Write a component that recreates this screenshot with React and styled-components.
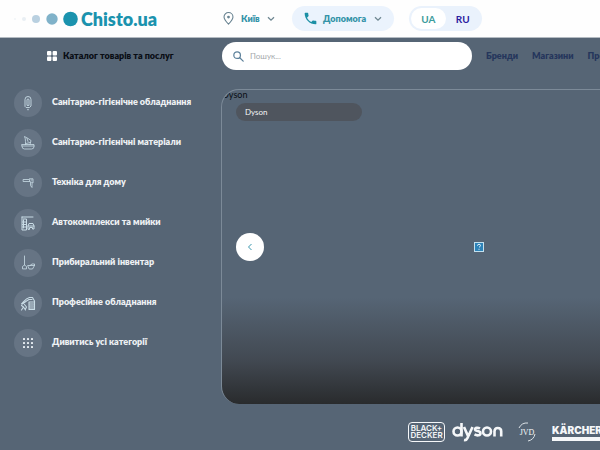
import styled, { createGlobalStyle } from "styled-components";

const GlobalStyle = createGlobalStyle`
  * {
    box-sizing: border-box;
  }

  body {
    margin: 0;
    background: #566575;
    font-family: "Lato", "Open Sans", sans-serif;
    font-size: 9px;
    line-height: 12px;
    overflow: hidden;
  }

  button, input {
    font: inherit;
    border: 0;
    padding: 0;
    background: transparent;
  }

  a {
    color: inherit;
    text-decoration: none;
  }

  svg {
    display: block;
    flex-shrink: 0;
  }
`;

const TopBar = styled.header`
  display: grid;
  grid-template-columns: 222px 1fr;
  align-items: center;
  height: 38px;
  background: #fefefe;
  border-bottom: 1px solid #b4bbc2;
`;

const Logo = styled.a`
  display: flex;
  align-items: center;
  padding-left: 14px;
`;

const LogoText = styled.span`
  margin-left: 3px;
  color: #1b93ae;
  font-size: 18px;
  line-height: 24px;
  font-weight: 800;
`;

const TopActions = styled.div`
  display: flex;
  align-items: center;
  gap: 10px;
`;

const CityButton = styled.button`
  display: flex;
  align-items: center;
  gap: 6px;
  min-width: 60px;
  padding-right: 7px;
  height: 25px;
  color: #3493a8;
  font-weight: 800;
`;

const HelpButton = styled(CityButton)`
  width: 102px;
  padding: 0 12px;
  border-radius: 13px;
  background: #ebf3fd;
`;

const ButtonLabel = styled.span`
  flex: 1;
  text-align: left;
`;

const LangSwitch = styled.div`
  display: flex;
  width: 73px;
  height: 25px;
  margin-left: 5px;
  padding: 2px;
  border-radius: 13px;
  background: #eaf2fc;
`;

const LangButton = styled.button`
  flex: 1;
  border-radius: 11px;
  font-size: 10px;
  font-weight: 700;
  color: ${props => (props.$active ? "#3c9c9c" : "#2a20a0")};
  background: ${props => (props.$active ? "#ffffff" : "transparent")};
`;

const SearchRow = styled.div`
  display: grid;
  grid-template-columns: 222px 250px 1fr;
  align-items: center;
  height: 36px;
`;

const CatalogButton = styled.button`
  display: flex;
  align-items: center;
  gap: 6px;
  padding-left: 47px;
  color: #090d14;
  font-weight: 800;
`;

const SearchBox = styled.label`
  display: flex;
  align-items: center;
  gap: 6px;
  height: 28px;
  padding: 0 11px;
  border-radius: 14px;
  background: #ffffff;
`;

const SearchInput = styled.input`
  flex: 1;
  min-width: 0;
  font-size: 8px;
  outline: 0;

  &::placeholder {
    color: #a5a9ad;
    opacity: 1;
  }
`;

const Nav = styled.nav`
  display: flex;
  gap: 14px;
  padding-left: 14px;
  overflow: hidden;
  white-space: nowrap;
  color: #25365c;
  font-weight: 800;
`;

const Main = styled.main`
  display: grid;
  grid-template-columns: 221px 1fr;
  padding-top: 15px;
`;

const Categories = styled.ul`
  display: flex;
  flex-direction: column;
  gap: 12px;
  margin: 0;
  padding: 0 0 0 14px;
  list-style: none;
`;

const Category = styled.a`
  display: flex;
  align-items: center;
  gap: 10px;
  height: 28px;
  color: #eef1f4;
  font-weight: 800;
  white-space: nowrap;
`;

const CategoryLabel = styled.span`
  padding-bottom: 2px;
`;

const IconCircle = styled.span`
  display: flex;
  align-items: center;
  justify-content: center;
  width: 28px;
  height: 28px;
  border-radius: 50%;
  background: #667484;
`;

const Content = styled.div`
  min-width: 0;
`;

const Banner = styled.section`
  position: relative;
  display: flex;
  align-items: center;
  height: 315px;
  padding-left: 14px;
  border: 1px solid #7c8a98;
  border-right: 0;
  border-bottom: 0;
  border-radius: 18px 0 0 18px;
  overflow: hidden;
  background: linear-gradient(transparent 66%, #424952 86%, #292b2d 100%);
`;

const BannerAlt = styled.span`
  position: absolute;
  top: 0;
  left: 0;
  line-height: 10px;
  color: #090d14;
`;

const BannerTag = styled.span`
  position: absolute;
  top: 13px;
  left: 14px;
  width: 126px;
  padding: 3px 9px;
  border-radius: 9px;
  background: #4f555e;
  color: #f3f4f5;
  font-size: 8px;
`;

const PrevButton = styled.button`
  display: flex;
  align-items: center;
  justify-content: center;
  width: 28px;
  height: 28px;
  border-radius: 50%;
  background: #ffffff;
`;

const Placeholder = styled.div`
  flex: 1;
  padding-left: 210px;
`;

const Brands = styled.div`
  display: flex;
  align-items: center;
  height: 56px;
  padding-left: 187px;
  overflow: hidden;
  color: #f5f7f9;
`;

const BlackDecker = styled.a`
  flex-shrink: 0;
  width: 37px;
  padding: 2px 0;
  border: 1px solid #f5f7f9;
  border-radius: 4px;
  font: 600 8px/7px "Inter", sans-serif;
  text-align: center;
`;

const BrandLink = styled.a`
  flex-shrink: 0;
  margin-left: 7px;
`;

const JvdLink = styled.a`
  flex-shrink: 0;
  margin-left: 14px;
`;

const Karcher = styled.a`
  flex-shrink: 0;
  margin-left: 15px;
  border-bottom: 4px solid #f5f7f9;
  font: 900 10px/13px "Inter", sans-serif;
`;

const LineIcon = ({ children, size = 16, color = "#c9dce6", width = 1 }) => (
  <svg
    width={size}
    height={size}
    viewBox="0 0 16 16"
    fill="none"
    stroke={color}
    strokeWidth={width}
    strokeLinecap="round"
    strokeLinejoin="round"
    aria-hidden="true"
  >
    {children}
  </svg>
);

const Chevron = () => (
  <svg width="8" height="6" viewBox="0 0 8 6" fill="none" stroke="#6f8792" strokeWidth="1.3" aria-hidden="true">
    <path d="M1 1.2 4 4.2 7 1.2" />
  </svg>
);

const categories = [
  {
    name: "Санітарно-гігієнічне обладнання",
    icon: (
      <>
        <path d="M5 11V4.500a3 3 0 0 1 6 0V11L9.500 12.500h-3ZM7 10V5a1 1 0 0 1 2 0v5Z" strokeWidth="0.9" />
        <path d="M8 14.500v.2" strokeWidth="1.3" />
      </>
    ),
  },
  {
    name: "Санітарно-гігієнічні матеріали",
    icon: (
      <path d="M2 9.500h12v2q0 2.500-2.500 2.500h-7Q2 14 2 11.500ZM2 11h12M5.500 9.500V6.500q0-3-1-5 4 2 6.500 4l-1 4M6 8.500l4-1M7 3.500l1 3" strokeWidth="0.8" />
    ),
  },
  {
    name: "Техніка для дому",
    icon: (
      <path d="M3.500 4.500h6v2h-6ZM9.500 3.800h3.500V8L11 7 9.500 6.500M10.500 7.500v3l1.500 2v-4M11 5h1" strokeWidth="0.8" />
    ),
  },
  {
    name: "Автокомплекси та мийки",
    icon: (
      <path d="M2 2h11M2 2v13h4.500V4H3.500M3.500 5v8M2.500 7h4M2.500 9.500h4M2.500 12h4M8 14v-3l1-2.500h4l1 2.500v3h-1.500v-1.500h-3V14ZM8 11h6" strokeWidth="1" />
    ),
  },
  {
    name: "Прибиральний інвентар",
    icon: (
      <path d="M4.500 1v9M2.500 13.500v-2l2-1.500 2 1.500v2ZM8 10.500h6.500L12.500 14H9.500ZM10 10.500 12 9h2.500v1.500" strokeWidth="0.8" />
    ),
  },
  {
    name: "Професійне обладнання",
    icon: (
      <path d="M1.500 9C4 7 5 3.500 9.500 2.500h3L14.500 6v8.500H9V7h5M2.500 9l4-3L9 4.500h3M10 9h3.500M10 11h3.500M10 13h3.500M1.500 10.500l2 1.500-2 3M3.500 12l2 3M4.500 9.500l2 2.500-1 2" strokeWidth="1.1" />
    ),
  },
  {
    name: "Дивитись усі категорії",
    icon: [4, 8, 12].map(y =>
      [4, 8, 12].map(x => (
        <rect key={`${x}-${y}`} x={x - 1} y={y - 1} width="2" height="2" rx=".5" fill="#e5ecf1" stroke="none" />
      ))
    ),
  },
];

const Header = () => (
  <TopBar>
    <Logo href="#">
      <svg width="64" height="16" viewBox="0 0 64 16" aria-hidden="true">
        <circle cx="1" cy="8" r="1" fill="#f0f4f7" />
        <circle cx="10" cy="8" r="2" fill="#e9eff4" />
        <circle cx="22" cy="8" r="4" fill="#b9d0e0" />
        <circle cx="38" cy="8" r="5.700" fill="#80b2c9" />
        <circle cx="56.500" cy="8" r="7.300" fill="#1b93ae" />
      </svg>
      <LogoText>Chisto.ua</LogoText>
    </Logo>
    <TopActions>
      <CityButton type="button">
        <LineIcon size={13} color="#65808f" width={1.3}>
          <path d="M8 15C5 11.800 2.500 9 2.500 6.200a5.500 5.500 0 0 1 11 0C13.500 9 11 11.800 8 15Z" />
          <circle cx="8" cy="6.200" r="1" fill="#65808f" />
        </LineIcon>
        <ButtonLabel>Київ</ButtonLabel>
        <Chevron />
      </CityButton>
      <HelpButton type="button">
        <svg width="13" height="13" viewBox="2 2 20 20" fill="#1b8fa5" aria-hidden="true">
          <path d="M6.620 10.790c1.440 2.830 3.760 5.140 6.590 6.590l2.200-2.200c.27-.27.67-.36 1.020-.24 1.120.37 2.330.57 3.570.57.55 0 1 .45 1 1V20c0 .55-.45 1-1 1C10.610 21 3 13.390 3 4c0-.55.45-1 1-1h3.500c.55 0 1 .45 1 1 0 1.250.2 2.450.57 3.570.11.35.03.74-.25 1.020Z" />
        </svg>
        <ButtonLabel>Допомога</ButtonLabel>
        <Chevron />
      </HelpButton>
      <LangSwitch>
        <LangButton type="button" $active>UA</LangButton>
        <LangButton type="button">RU</LangButton>
      </LangSwitch>
    </TopActions>
  </TopBar>
);

const Search = () => (
  <SearchRow>
    <CatalogButton type="button">
      <svg width="10" height="10" viewBox="0 0 10 10" fill="#ffffff" aria-hidden="true">
        <rect width="4.400" height="4.400" rx="1" />
        <rect x="5.600" width="4.400" height="4.400" rx="1" />
        <rect y="5.600" width="4.400" height="4.400" rx="1" />
        <rect x="5.600" y="5.600" width="4.400" height="4.400" rx="1" />
      </svg>
      Каталог товарів та послуг
    </CatalogButton>
    <SearchBox>
      <LineIcon size={11} color="#5d819b" width={1.8}>
        <circle cx="6" cy="6" r="4.800" />
        <path d="m9.800 9.800 5 5" />
      </LineIcon>
      <SearchInput type="search" placeholder="Пошук..." aria-label="Пошук" />
    </SearchBox>
    <Nav>
      <a href="#">Бренди</a>
      <a href="#">Магазини</a>
      <a href="#">Про нас</a>
    </Nav>
  </SearchRow>
);

const BrandStrip = () => (
  <Brands>
    <BlackDecker href="#">BLACK+ DECKER</BlackDecker>
    <BrandLink href="#" aria-label="dyson">
      <svg width="51" height="20" viewBox="0 0 51 20" fill="none" stroke="#f5f7f9" strokeWidth="2.600" aria-hidden="true">
        <circle cx="5.500" cy="9.500" r="4" />
        <path d="M9.500 1v13.500M12 5l4 9M20.500 5l-5 11q-1 2.500-3.500 2M28 6.500c-2-1.200-5-1-5 .8 0 2.500 5.500 1 5.500 3.900 0 2.400-3.500 2.700-6 1.200M42.500 14.500V9.200q0-3.200 3.200-3.200 3.500 0 3.500 3.200v5.300" />
        <circle cx="35" cy="9.500" r="4" />
      </svg>
    </BrandLink>
    <JvdLink href="#" aria-label="JVD">
      <svg width="20" height="20" viewBox="0 0 20 20" fill="none" stroke="#dce3e8" aria-hidden="true">
        <path d="M2 6A9 9 0 0 1 11 1M18 12a9 9 0 0 1-7 7" />
        <text x="10" y="13" textAnchor="middle" fill="#f5f7f9" stroke="none" fontFamily="Liberation Serif, serif" fontSize="8">
          JVD
        </text>
      </svg>
    </JvdLink>
    <Karcher href="#">KÄRCHER</Karcher>
  </Brands>
);

const App = () => {
  return (
    <>
      <GlobalStyle />
      <Header />
      <Search />
      <Main>
        <Categories>
          {categories.map(({ name, icon }) => (
            <li key={name}>
              <Category href="#">
                <IconCircle>
                  <LineIcon>{icon}</LineIcon>
                </IconCircle>
                <CategoryLabel>{name}</CategoryLabel>
              </Category>
            </li>
          ))}
        </Categories>
        <Content>
          <Banner>
            <BannerAlt>Dyson</BannerAlt>
            <BannerTag>Dyson</BannerTag>
            <PrevButton type="button" aria-label="Назад">
              <svg width="6" height="8" viewBox="0 0 6 8" fill="none" stroke="#3996ad" aria-hidden="true">
                <path d="M4.500 1 1.500 4l3 3" />
              </svg>
            </PrevButton>
            <Placeholder>
              <svg width="10" height="10" viewBox="0 0 10 10" aria-hidden="true">
                <rect x=".5" y=".5" width="9" height="9" fill="#2d83b8" stroke="#c3e0ee" />
                <path d="M3.500 3.700q0-1.400 1.500-1.400t1.500 1.200Q6.500 4.500 5 5.300M5 6.800v1" fill="none" stroke="#e4f3fa" />
              </svg>
            </Placeholder>
          </Banner>
          <BrandStrip />
        </Content>
      </Main>
    </>
  );
};

export default App;
